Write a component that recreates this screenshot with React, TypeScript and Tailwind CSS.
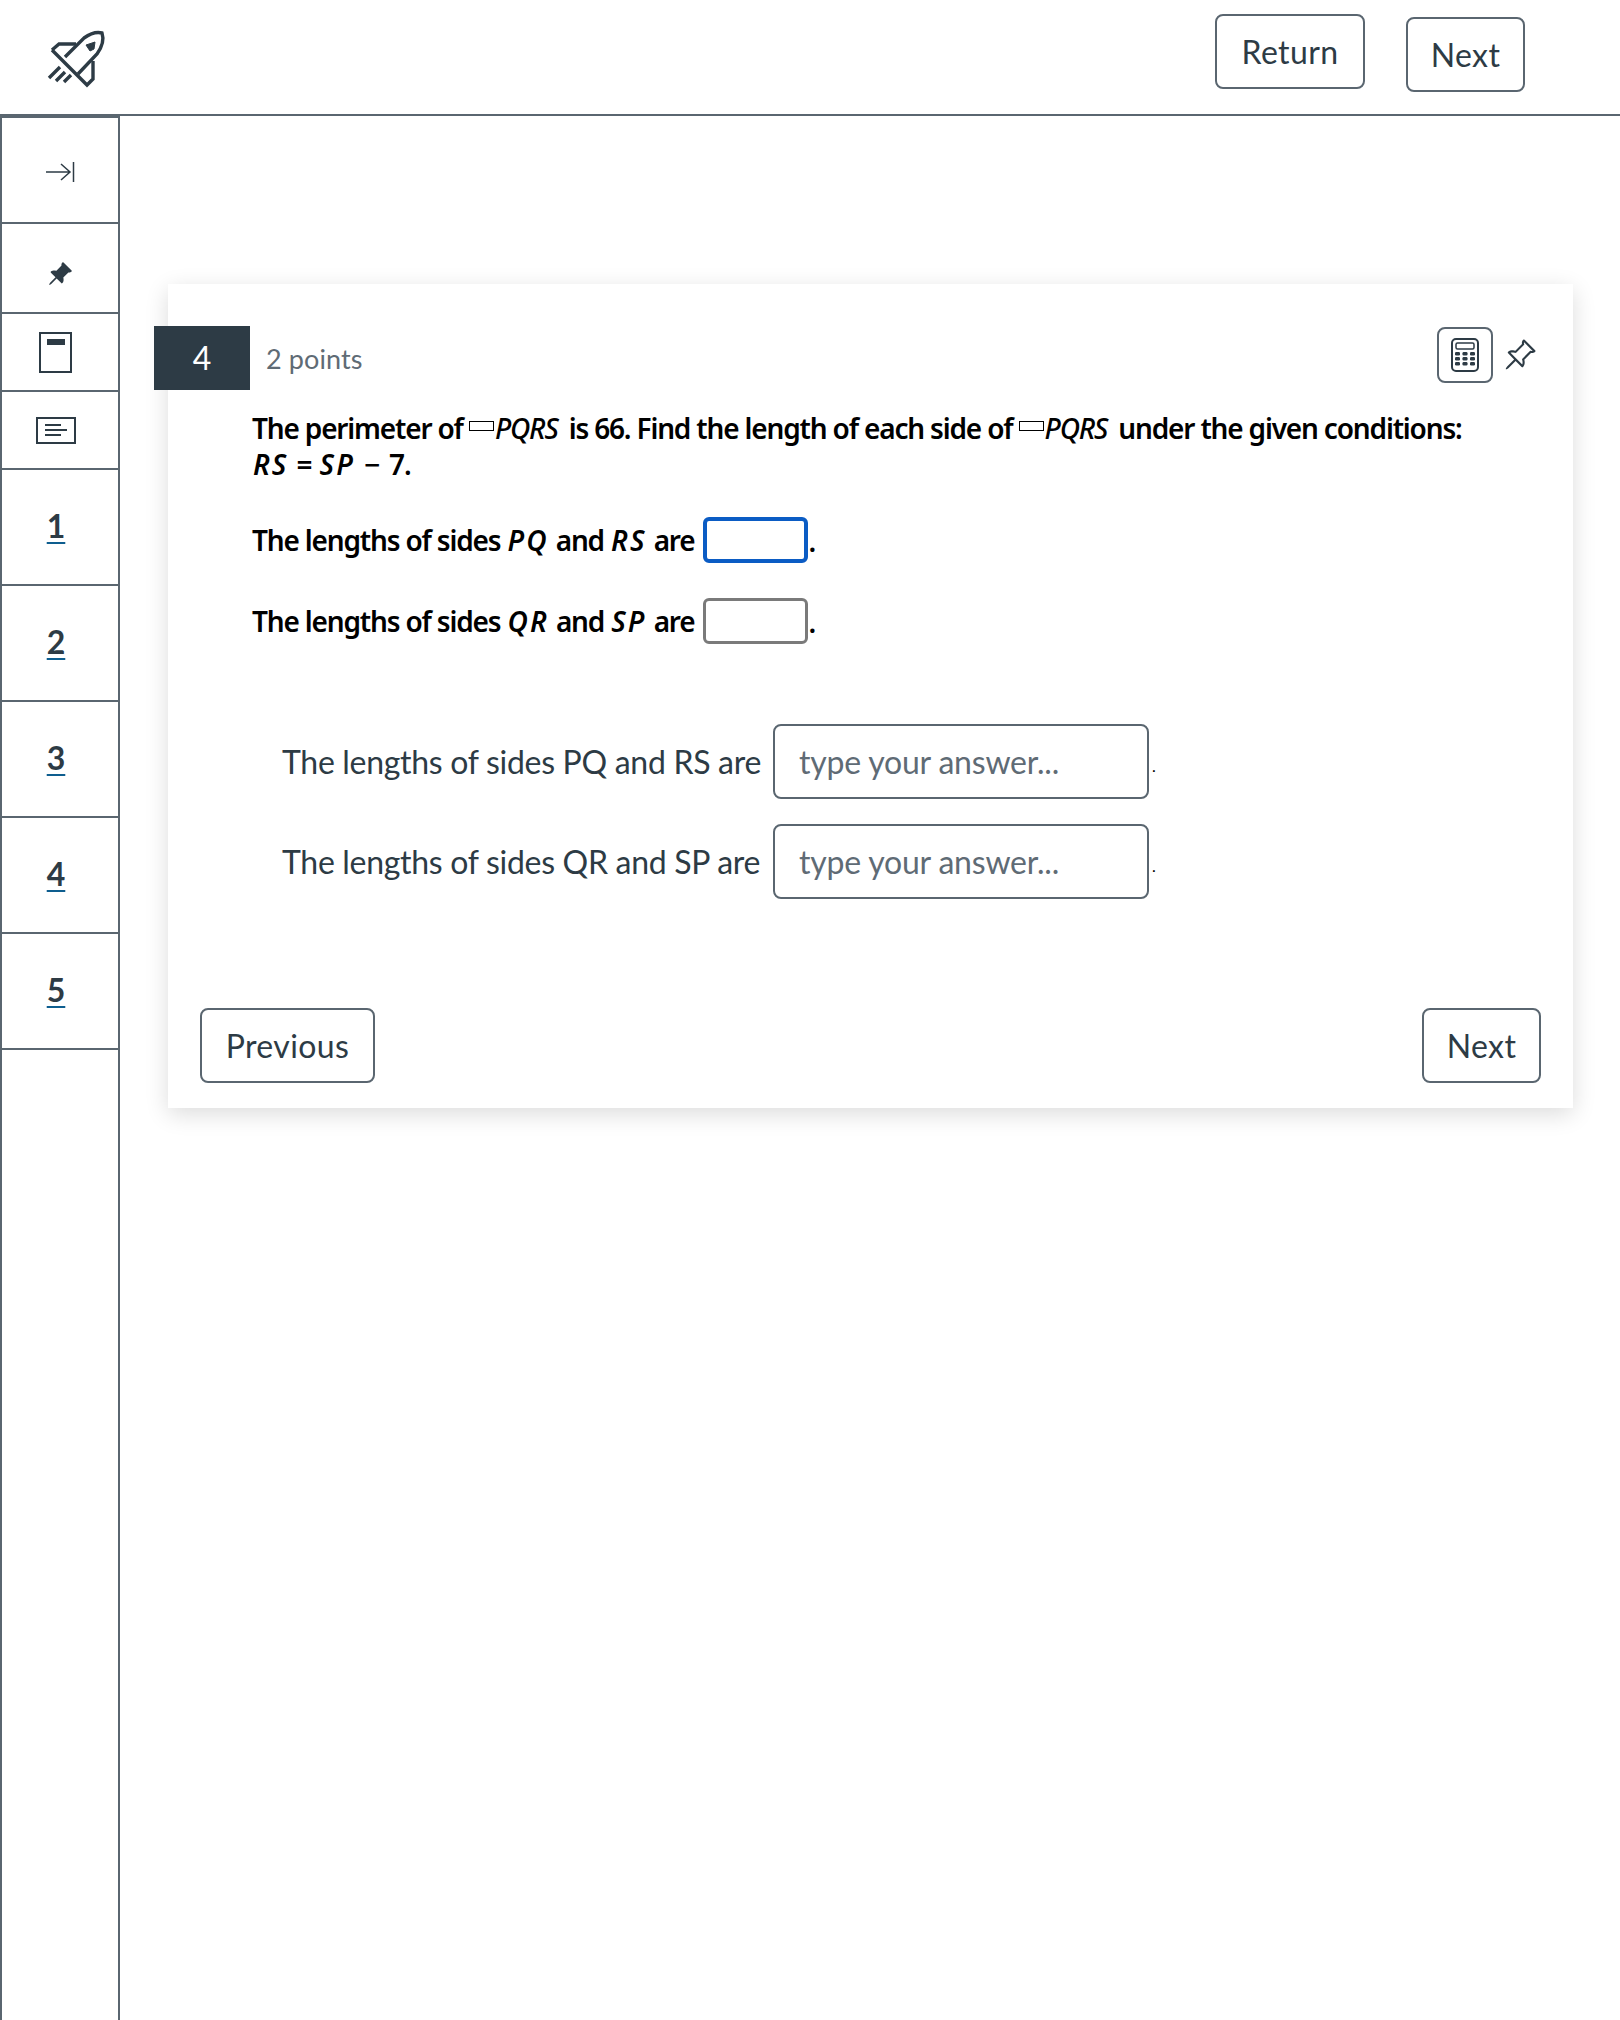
import { BsPinAngle, BsPinAngleFill } from "react-icons/bs";

const lato = { fontFamily: "Lato, sans-serif" };

function Rocket() {
  return (
    <svg width="70" height="64" viewBox="0 0 70 64" fill="none" stroke="#2d3b45" strokeWidth="3.4">
      <path d="M7 21 L42 56 L48 50 L48 32" />
      <path d="M7 21 L14 15 L31 15" />
      <path d="M20 28 L39 9 C46 4 53 3 57 4 C59 10 57 18 52 25 L33 45" />
      <path d="M4 49 L15 38 M11 52 L20 43 M19 53 L26 46" />
      <path d="M41 16 L50 13 L49 20 L45 22 Z" fill="#2d3b45" strokeWidth="1" />
    </svg>
  );
}

function CollapseIcon() {
  return (
    <svg width="30" height="22" viewBox="0 0 30 22" fill="none" stroke="#2d3b45" strokeWidth="1.5">
      <path d="M1 11 H25 M16 3 L25 11 L16 19" />
      <path d="M28.5 1 V21" />
    </svg>
  );
}

function PageIcon() {
  return (
    <svg width="34" height="41" viewBox="0 0 34 41" fill="none">
      <rect x="1" y="1" width="31" height="39" stroke="#2d3b45" strokeWidth="2" />
      <rect x="8" y="7" width="18" height="6" fill="#2d3b45" />
    </svg>
  );
}

function NoteIcon() {
  return (
    <svg width="40" height="27" viewBox="0 0 40 27" fill="none" stroke="#2d3b45">
      <rect x="1" y="1" width="38" height="25" strokeWidth="2" />
      <path d="M9 8 H25 M9 13 H31 M9 18 H25" strokeWidth="2" />
    </svg>
  );
}

function CalculatorIcon() {
  const dots = [];
  for (let r = 0; r < 3; r++) {
    for (let c = 0; c < 3; c++) {
      dots.push(<rect key={`${r}${c}`} x={4 + c * 7.5} y={14 + r * 5} width="5" height="3.4" rx="1.2" fill="#2d3b45" />);
    }
  }
  return (
    <svg width="28" height="34" viewBox="0 0 28 34" fill="none">
      <rect x="1" y="1" width="26" height="32" rx="4" stroke="#2d3b45" strokeWidth="2" />
      <rect x="5" y="5" width="18" height="6" rx="1.5" stroke="#2d3b45" strokeWidth="1.5" />
      {dots}
    </svg>
  );
}

function SideRow({ h, children }: { h: string; children: React.ReactNode }) {
  return <div className={`${h} flex items-center justify-center border-b-2 border-[#5a6670]`}>{children}</div>;
}

function NumRow({ n }: { n: number }) {
  return (
    <div className="h-[116px] flex items-center justify-center border-b-2 border-[#5a6670] pr-2 pb-[2px]">
      <span className="text-[32px] font-bold text-[#2d3b45] underline decoration-[#0e5e8f] decoration-2 underline-offset-4">{n}</span>
    </div>
  );
}

function Variable({ children }: { children: React.ReactNode }) {
  return <i className="tracking-[2px] mx-[1px]">{children}</i>;
}

function ParallelogramBox() {
  return <span className="inline-block w-[25px] h-[10px] border border-black align-[8px] mr-[1px]" />;
}

function OutlineButton({ label, className }: { label: string; className: string }) {
  return (
    <button className={`h-[75px] flex items-center justify-center rounded-lg border-2 border-[#5a6670] bg-white text-[32px] tracking-[0.4px] text-[#2d3b45] ${className}`} style={lato}>
      {label}
    </button>
  );
}

function AnswerRow({ label }: { label: string }) {
  return (
    <div className="flex items-center text-[32px] text-[#2d3b45] tracking-[-0.2px]">
      <span className="w-[491px] tracking-[-0.3px]">{label}</span>
      <input
        type="text"
        placeholder="type your answer..."
        className="w-[376px] h-[75px] rounded-lg border-2 border-[#5a6670] bg-white px-6 text-[32px] placeholder:text-[#5f6b75] placeholder:opacity-100"
      />
      <span className="ml-[3px] mt-[8px] text-[16px] text-black">.</span>
    </div>
  );
}

function ShortAnswer({ active }: { active?: boolean }) {
  return (
    <span
      className={
        active
          ? "inline-block w-[105px] h-[46px] rounded-md border-[4px] border-[#0b5cc4] align-middle"
          : "inline-block w-[105px] h-[46px] rounded-md border-[3px] border-[#7a7a7a] align-middle"
      }
    />
  );
}

export default function App() {
  return (
    <div className="min-h-[2020px] flex flex-col bg-white" style={lato}>
      <header className="h-[116px] shrink-0 flex items-start border-b-2 border-[#5a6670]">
        <div className="ml-[45px] mt-[29px]">
          <Rocket />
        </div>
        <div className="ml-auto mr-[95px] flex items-start gap-[41px]">
          <OutlineButton label="Return" className="w-[150px] mt-[14px]" />
          <OutlineButton label="Next" className="w-[119px] mt-[17px]" />
        </div>
      </header>

      <div className="flex flex-1">
        <aside className="w-[120px] shrink-0 border-x-2 border-t-2 border-[#5a6670]">
          <SideRow h="h-[106px] pt-[4px]">
            <CollapseIcon />
          </SideRow>
          <SideRow h="h-[90px] pt-[12px]">
            <BsPinAngleFill size={26} color="#2d3b45" />
          </SideRow>
          <SideRow h="h-[78px] pr-2">
            <PageIcon />
          </SideRow>
          <SideRow h="h-[78px] pr-2">
            <NoteIcon />
          </SideRow>
          {[1, 2, 3, 4, 5].map((n) => (
            <NumRow key={n} n={n} />
          ))}
        </aside>

        <main className="flex-1 pl-[48px] pt-[168px]">
          <section className="w-[1405px] h-[824px] bg-white shadow-[0_6px_22px_rgba(0,0,0,0.14)] pt-[42px] flex flex-col">
            <div className="flex items-center h-[64px] pr-[36px]">
              <div className="-ml-[14px] w-[96px] h-[64px] bg-[#2d3b45] flex items-center justify-center text-white text-[32px]">4</div>
              <span className="ml-[16px] mt-[2px] text-[27px] tracking-[0.1px] text-[#5f6b75]">2 points</span>
              <div className="ml-auto flex items-center gap-[10px] -mt-[6px]">
                <button className="w-[56px] h-[56px] flex items-center justify-center rounded-lg border-2 border-[#5a6670]">
                  <CalculatorIcon />
                </button>
                <BsPinAngle size={34} color="#2d3b45" />
              </div>
            </div>

            <div className="pl-[84px] pr-[40px] text-black font-semibold text-[28px] tracking-[-1.17px]" style={{ fontFamily: '"Noto Sans", sans-serif' }}>
              <p className="leading-[36px] mt-[20px]">
                The perimeter of <ParallelogramBox /><i className="mr-[5px] font-medium">PQRS</i> is 66. Find the length of each side of <ParallelogramBox /><i className="mr-[5px] font-medium">PQRS</i> under the given conditions:
                <br />
                <Variable>RS</Variable> <span className="mx-[1px]">=</span> <Variable>SP</Variable> <span className="mx-[2px]">−</span> <span className="ml-[2px]">7.</span>
              </p>
              <p className="mt-[35px] h-[46px] flex items-center gap-[9px]">
                <span>The lengths of sides <Variable>PQ</Variable> and <Variable>RS</Variable> are</span>
                <span className="flex items-end">
                  <ShortAnswer active />
                  <span className="leading-[44px]">.</span>
                </span>
              </p>
              <p className="mt-[35px] h-[46px] flex items-center gap-[9px]">
                <span>The lengths of sides <Variable>QR</Variable> and <Variable>SP</Variable> are</span>
                <span className="flex items-end">
                  <ShortAnswer />
                  <span className="leading-[44px]">.</span>
                </span>
              </p>
            </div>

            <div className="pl-[114px] mt-[80px] flex flex-col gap-[25px]">
              <AnswerRow label="The lengths of sides PQ and RS are" />
              <AnswerRow label="The lengths of sides QR and SP are" />
            </div>

            <div className="mt-auto mb-[25px] px-[32px] flex justify-between">
              <OutlineButton label="Previous" className="w-[175px]" />
              <OutlineButton label="Next" className="w-[119px]" />
            </div>
          </section>
        </main>
      </div>
    </div>
  );
}
